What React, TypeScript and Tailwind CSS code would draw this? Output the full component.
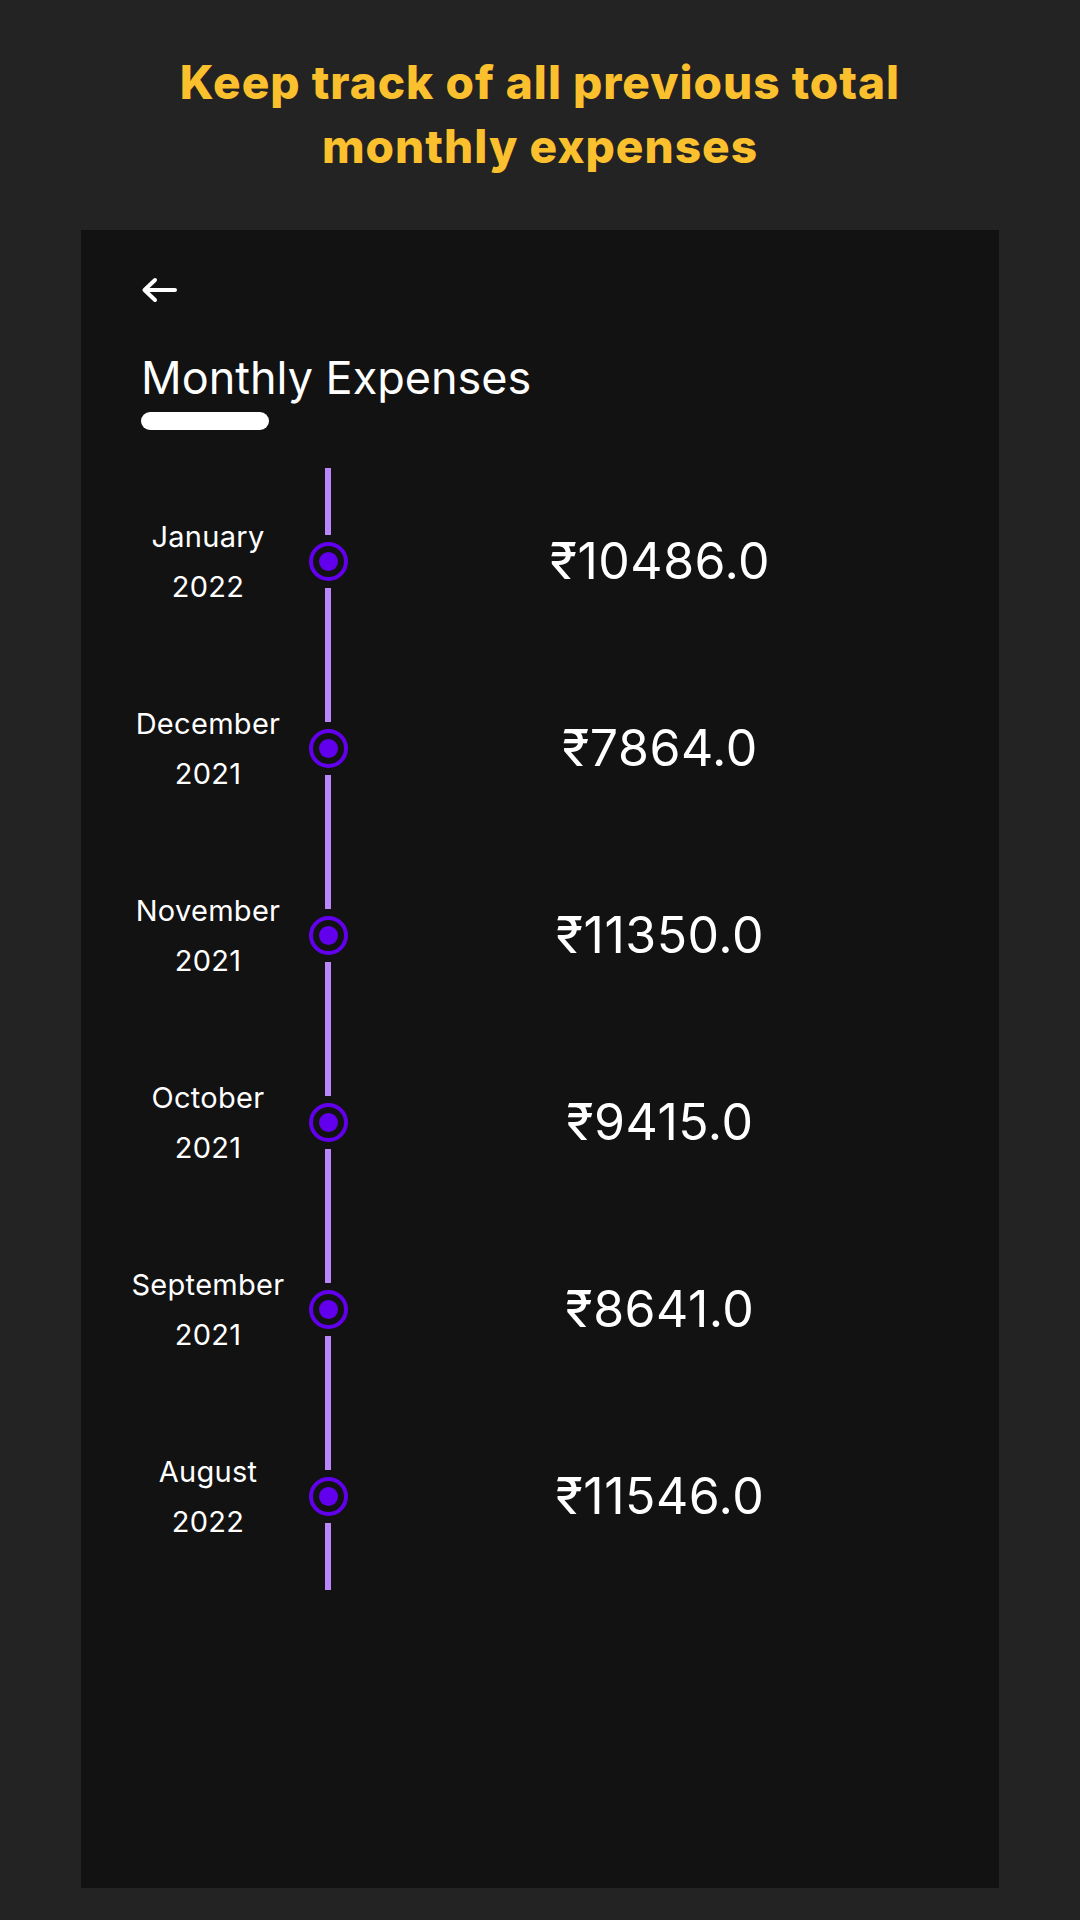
const entries = [
  { month: "January", year: "2022", amount: "₹10486.0" },
  { month: "December", year: "2021", amount: "₹7864.0" },
  { month: "November", year: "2021", amount: "₹11350.0" },
  { month: "October", year: "2021", amount: "₹9415.0" },
  { month: "September", year: "2021", amount: "₹8641.0" },
  { month: "August", year: "2022", amount: "₹11546.0" },
];

const bodyFont = "font-['Inter',_'Noto_Sans',_sans-serif]";

function TimelineRow({ month, year, amount }: { month: string; year: string; amount: string }) {
  return (
    <div className="flex h-[187px] items-center">
      <div className="flex w-[200px] flex-col items-center text-[29px] leading-[50px] tracking-[0.3px] text-white">
        <span>{month}</span>
        <span>{year}</span>
      </div>
      <div className="flex w-[40px] flex-col items-center">
        <div className="h-[67px] w-[6px] bg-[#BB86FC]" />
        <div className="my-[7px] flex h-[39px] w-[39px] items-center justify-center rounded-full border-[4px] border-[#6200EE]">
          <div className="h-[19px] w-[19px] rounded-full bg-[#6200EE]" />
        </div>
        <div className="h-[67px] w-[6px] bg-[#BB86FC]" />
      </div>
      <div className="flex-1 text-center text-[50px] tracking-[0.5px] text-white">{amount}</div>
    </div>
  );
}

export default function App() {
  return (
    <div className={`flex min-h-[1920px] w-[1080px] flex-col items-center bg-[#232323] ${bodyFont}`}>
      <h1 className="pt-[50px] text-center text-[46px] font-extrabold leading-[64px] tracking-[1px] text-[#FBC02D]">
        Keep track of all previous total
        <br />
        monthly expenses
      </h1>

      <div className="mt-[52px] h-[1658px] w-[918px] bg-[#121212]">
        <div className="pl-[60px] pt-[47px]">
          <svg width="37" height="26" viewBox="0 0 37 26" fill="none">
            <path
              d="M34 13H4M14 3L3.5 13L14 23"
              stroke="white"
              strokeWidth="4"
              strokeLinecap="round"
              strokeLinejoin="round"
            />
          </svg>
          <h2 className="mt-[52px] text-[45px] leading-[46px] text-white">Monthly Expenses</h2>
          <div className="mt-[11px] h-[18px] w-[128px] rounded-full bg-white" />
        </div>

        <div className="mt-[38px] pl-[27px] pr-[27px]">
          {entries.map((e) => (
            <TimelineRow key={e.month} {...e} />
          ))}
        </div>
      </div>
    </div>
  );
}
